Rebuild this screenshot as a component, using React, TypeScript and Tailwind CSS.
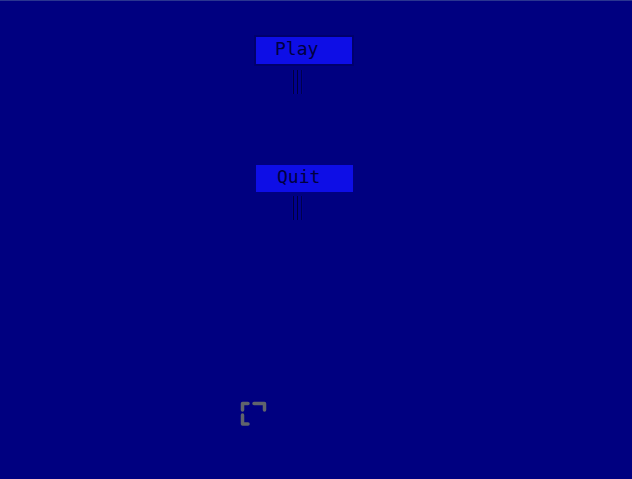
import React from "react";

function Marks() {
  return (
    <div className="flex gap-[3px] h-[24px] mt-[4px] ml-[38px] px-[1px] bg-[#00008c]">
      <div className="w-[1px] h-[24px] bg-[#00003a]" />
      <div className="w-[1px] h-[24px] bg-[#00003a]" />
      <div className="w-[1px] h-[24px] bg-[#00004c]" />
    </div>
  );
}

export default function App() {
  const font = { fontFamily: '"DejaVu Sans Mono", "Liberation Mono", monospace' };
  return (
    <div className="w-[632px] h-[479px] bg-[#000080] border-t border-[#2a3590] overflow-hidden">
      <div className="flex flex-col items-start pl-[254px] pt-[34px]">
        <button
          className="w-[100px] h-[31px] bg-[#0e0ee6] border-2 border-[#00006c] text-[18px] leading-none text-[#000040] flex items-center pl-[19px] pb-[3px]"
          style={font}
        >
          Play
        </button>
        <Marks />
        <button
          className="mt-[71px] ml-[2px] w-[97px] h-[27px] bg-[#0e0ee6] text-[18px] leading-none text-[#000040] flex items-center pl-[21px] pb-[3px]"
          style={font}
        >
          Quit
        </button>
        <Marks />
        <svg
          className="mt-[181px] -ml-[14px]"
          width="28"
          height="26"
          viewBox="0 0 28 26"
          fill="none"
          stroke="#60646c"
          strokeWidth="3.5"
          strokeLinecap="round"
          strokeLinejoin="round"
        >
          <path d="M2.5 9 V2.5 H8" />
          <path d="M14 2.5 H24.5 V9" />
          <path d="M2.5 14 V23 H8" />
        </svg>
      </div>
    </div>
  );
}
